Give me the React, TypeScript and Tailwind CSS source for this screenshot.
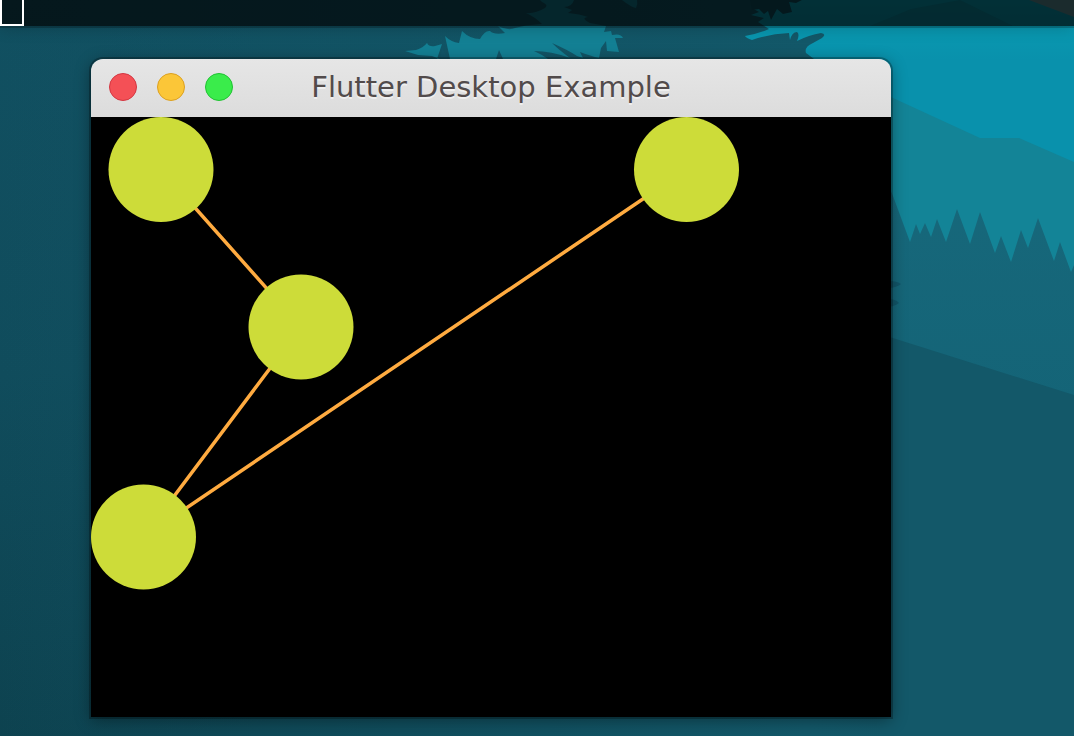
const nodes = [
  { x: 70, y: 52.5 },
  { x: 210, y: 210 },
  { x: 52.5, y: 420 },
  { x: 595.5, y: 52.5 },
];

function Wallpaper() {
  return (
    <svg
      className="absolute inset-0 -z-10 h-full w-full"
      viewBox="0 0 1074 736"
      preserveAspectRatio="xMinYMin slice"
      aria-hidden="true"
    >
      <defs>
        <linearGradient id="left" x1="0" y1="0" x2="0.15" y2="1">
          <stop offset="0" stopColor="#115061" />
          <stop offset="0.5" stopColor="#104c5c" />
          <stop offset="1" stopColor="#0d424f" />
        </linearGradient>
        <linearGradient id="ground" x1="0" y1="0" x2="1" y2="0">
          <stop offset="0" stopColor="#13586a" stopOpacity="0" />
          <stop offset="0.75" stopColor="#135869" />
          <stop offset="1" stopColor="#125566" />
        </linearGradient>
        <linearGradient id="forest" x1="0" y1="0" x2="0" y2="1">
          <stop offset="0" stopColor="#17687b" />
          <stop offset="1" stopColor="#146477" />
        </linearGradient>
        <linearGradient id="sky" gradientUnits="userSpaceOnUse" x1="0" y1="0" x2="0" y2="60">
          <stop offset="0" stopColor="#08a2b8" />
          <stop offset="0.45" stopColor="#0998b0" />
          <stop offset="1" stopColor="#0991ac" />
        </linearGradient>
      </defs>
      <rect width="1074" height="736" fill="url(#left)" />
      <rect width="1074" height="736" fill="url(#ground)" />
      <path fill="url(#sky)" d="M752 0H1074V300H830V59H814L806 53Q804 47 813 43L822 38Q827 34 821 33Q809 35 797 41Q800 34 797 32Q792 32 790 40L789 33Q769 34 752 40Q746 38 745 36Q757 34 769 29L758 22L764 18L751 15L759 12L752 8L756 4Z" />
      <path fill="#0e5263" d="M750 0H802L796 3L789 2L792 12L783 14L777 9L771 20L768 11L764 14L759 9L752 10Z" />
      <path fill="#0b8094" opacity="0.5" d="M870 26L911 9L960 0L1013 26Z" />
      <path fill="#5c8f98" d="M1029 0H1074V17Z" />
      <path fill="#138497" d="M880 92L980 138H1019L1074 162V400H880Z" />
      <path fill="url(#forest)" d="M880 165L893 196L910 242L916 224L920 234L925 223L931 237L937 219L946 242L957 209L970 244L980 212L995 253L1001 236L1011 262L1021 230L1028 248L1038 218L1054 261L1060 242L1071 272L1074 265V410H880Z" />
      <path fill="#125669" d="M880 281Q895 280 901 284Q896 289 880 288ZM880 299Q895 298 899 303Q895 307 880 308Z" />
      <path fill="#135869" d="M880 334L1074 395V736H880Z" />
      <path
        fill="#138094"
        d="M405 51L416 50Q423 48 427 43Q429 47 435 46L442 44L437 59H450L445 36Q451 42 459 43L462 31Q470 39 480 39Q485 30 490 31Q494 35 505 33L498 26Q508 31 515 28Q524 25 542 24Q535 17 526 13Q535 14 545 8Q549 5 542 2L540 0H574Q572 7 564 7L572 10L568 13Q580 14 588 17Q580 18 590 23L606 26L604 32L611 31L612 35Q621 33 623 38L615 38L619 52L607 51L606 41L601 48L599 58Q591 56 580 52L583 58L577 56Q568 50 552 43Q559 50 570 58Q551 51 534 51Q541 54 548 59H440L432 56L418 55Z"
      />
      <path fill="#125568" d="M440 59L442 47L448 59ZM499 50L496 59H503Z" />
      <path fill="#138094" d="M622 0Q631 7 636 8Q638 4 637 0Z" />
    </svg>
  );
}

function Graph() {
  return (
    <svg className="block w-full bg-black" viewBox="0 0 800 600" role="img" aria-label="Node graph">
      <polyline
        points={nodes.map((n) => `${n.x},${n.y}`).join(" ")}
        fill="none"
        stroke="#ffab40"
        strokeWidth="3.5"
      />
      {nodes.map((n) => (
        <circle key={`${n.x}-${n.y}`} cx={n.x} cy={n.y} r="52.5" fill="#cddc39" />
      ))}
    </svg>
  );
}

export default function App() {
  return (
    <div className="relative isolate flow-root min-h-screen overflow-hidden bg-[#115061] font-['DejaVu_Sans',sans-serif]">
      <Wallpaper />
      <nav className="flex h-[26px] bg-black/70 shadow-[0_2px_0_rgba(0,0,0,0.22),0_2px_16px_rgba(0,0,0,0.2)]">
        <button type="button" aria-label="Workspace" className="w-6 border-2 border-t-0 border-white" />
      </nav>
      <main className="mt-[33px] pl-[91px]">
        <section className="w-full max-w-[800px] overflow-hidden rounded-t-xl shadow-[0_0_0_2px_rgba(0,0,0,0.25),0_3px_16px_rgba(0,0,0,0.4)]">
          <header className="grid h-[58px] grid-cols-[1fr_auto_1fr] items-center bg-linear-to-b from-[#e6e6e6] to-[#dcdcdc] px-[18px] pb-0.5">
            <div className="flex gap-5">
              <button type="button" aria-label="Close" className="size-7 rounded-full border border-[#d33641] bg-[#f45056]" />
              <button type="button" aria-label="Minimize" className="size-7 rounded-full border border-[#dca020] bg-[#fbc638]" />
              <button type="button" aria-label="Maximize" className="size-7 rounded-full border border-[#20c233] bg-[#3aec4b]" />
            </div>
            <h1 className="text-[29px] leading-8 whitespace-nowrap text-[#524b4b] [text-shadow:0_2px_0_rgba(255,255,255,0.5)]">
              Flutter Desktop Example
            </h1>
          </header>
          <Graph />
        </section>
      </main>
    </div>
  );
}
